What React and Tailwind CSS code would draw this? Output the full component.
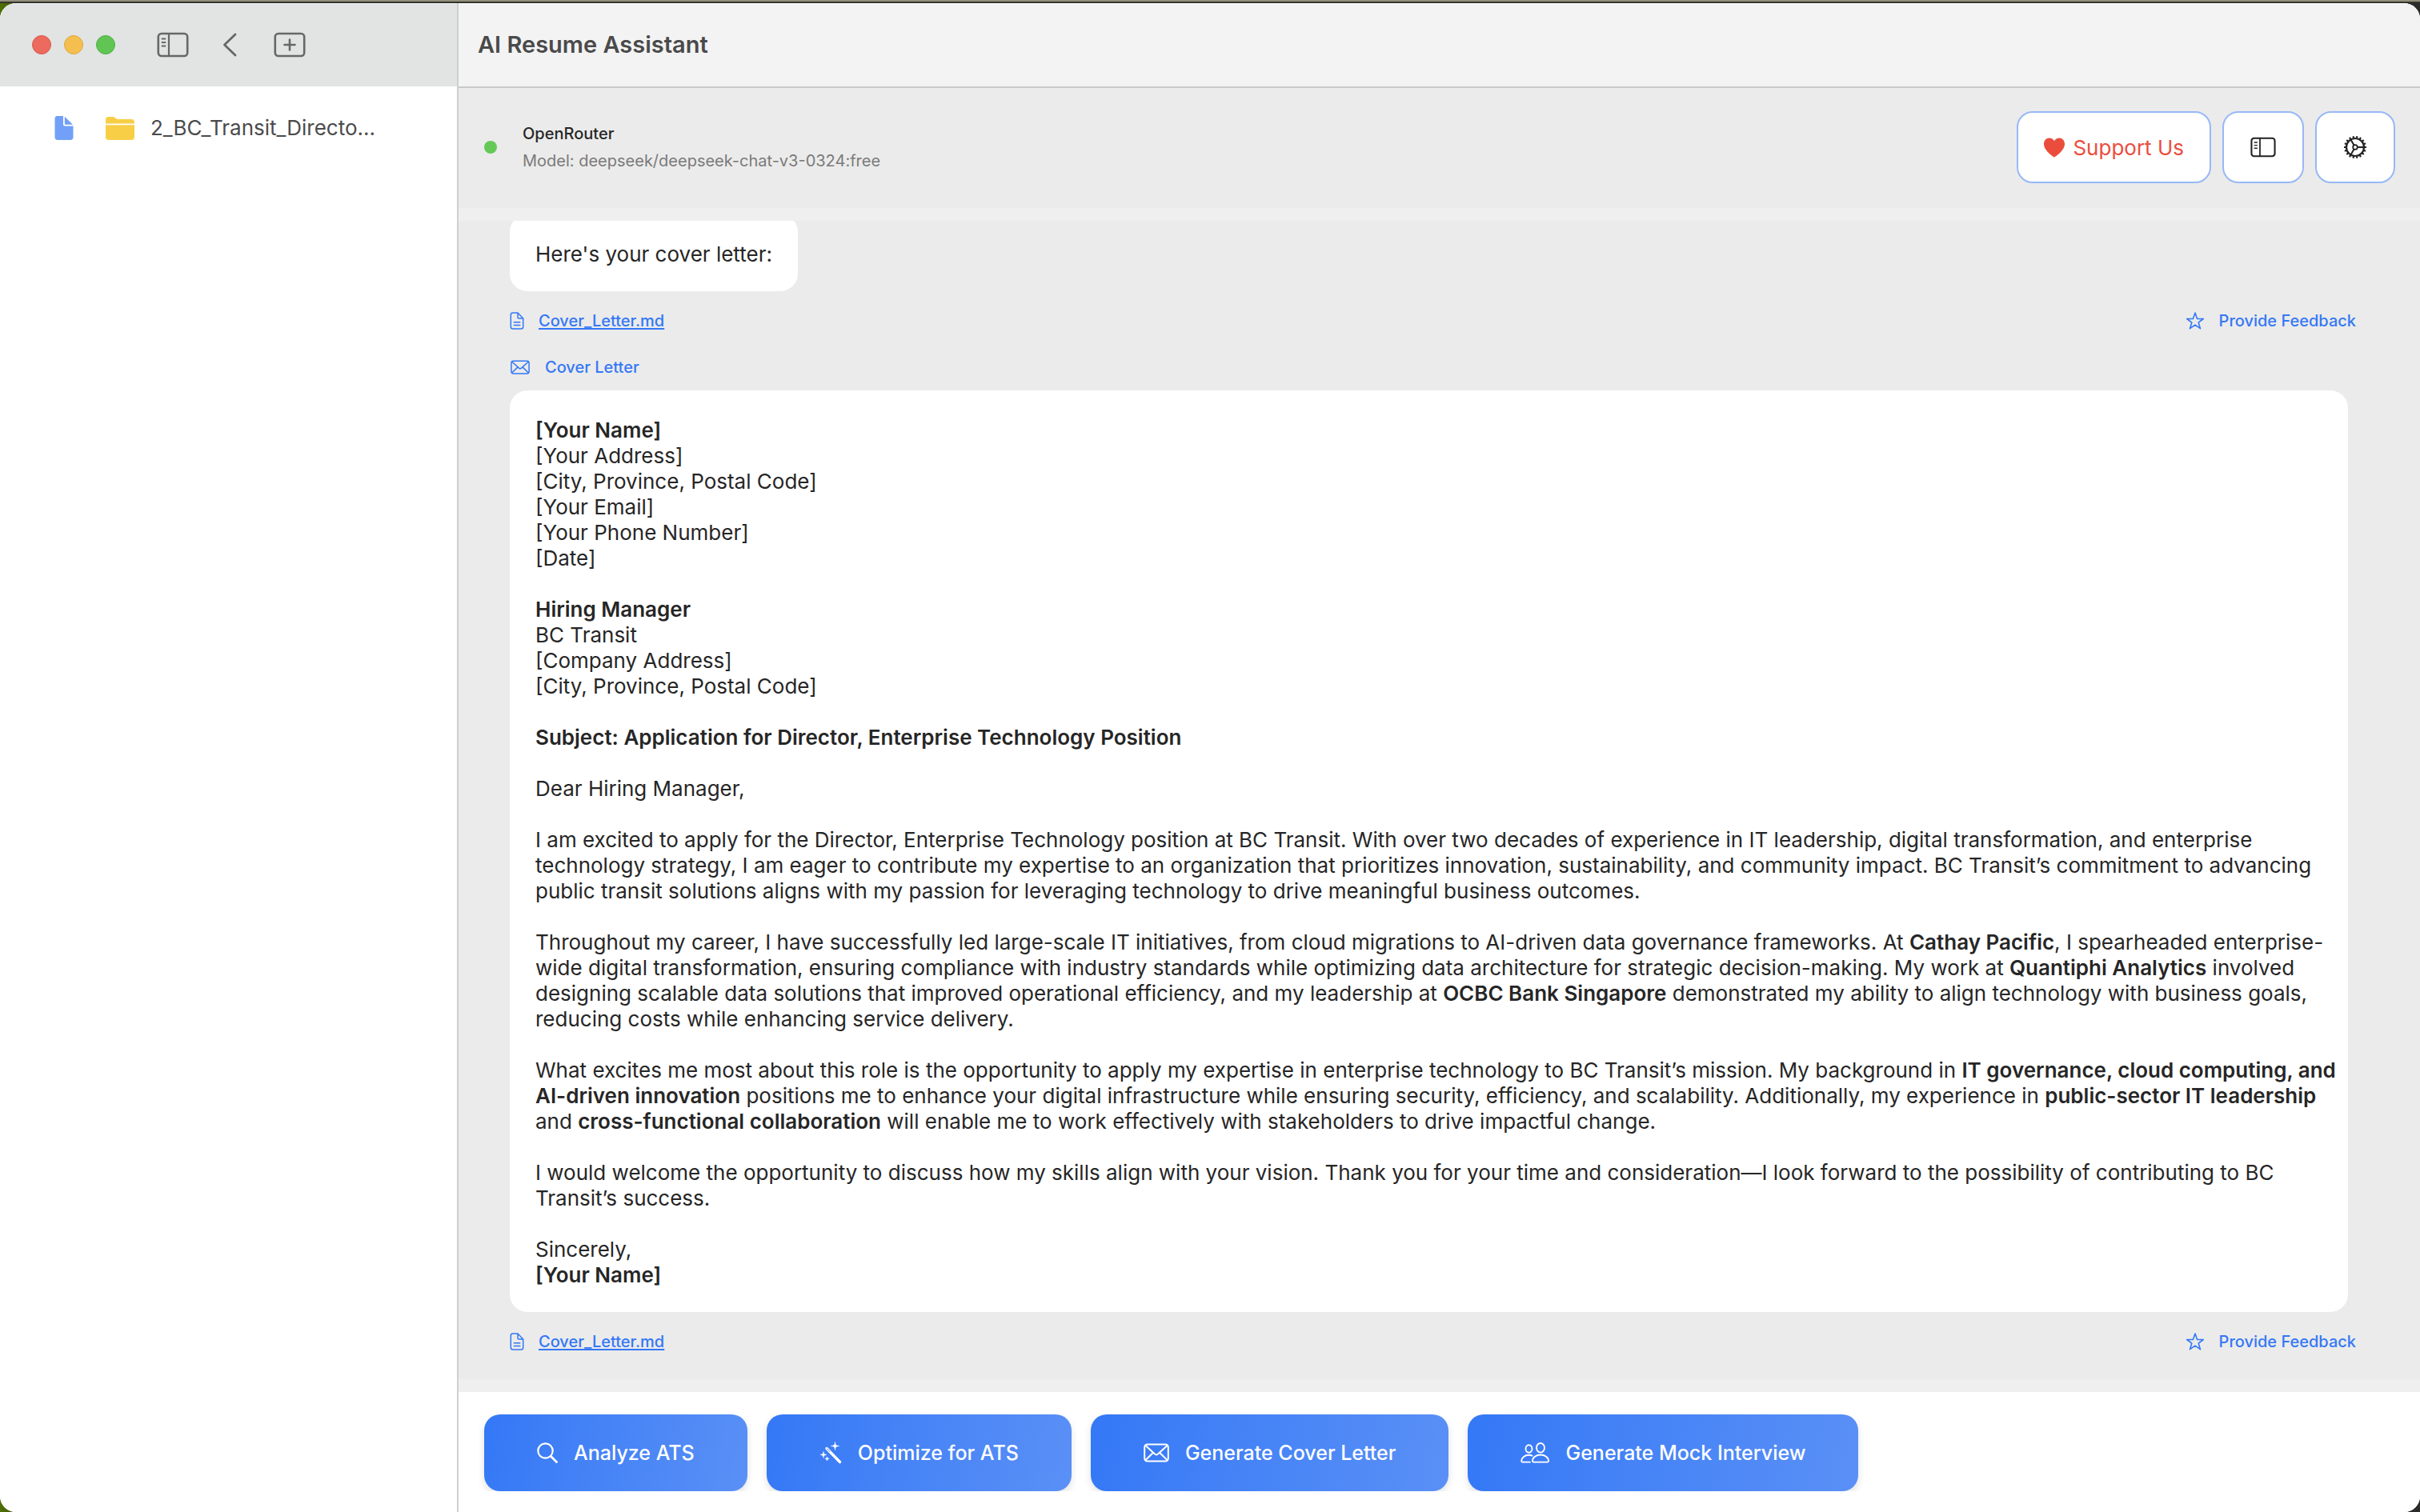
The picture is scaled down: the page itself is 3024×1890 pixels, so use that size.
const stroke = {
  fill: "none",
  stroke: "currentColor",
  strokeLinecap: "round",
  strokeLinejoin: "round",
};

function SidebarIcon({ className }) {
  return (
    <svg viewBox="0 0 40 32" className={className} aria-hidden="true" {...stroke} strokeWidth="2.6">
      <rect x="1.8" y="2" width="36.4" height="28" rx="4" />
      <path d="M15 2v28" strokeWidth="2.2" />
      <path d="M6.5 8.5h4M6.5 13h4M6.5 17.5h4" strokeWidth="1.8" />
    </svg>
  );
}

function ChevronIcon() {
  return (
    <svg viewBox="0 0 18 30" className="h-[30px] w-[18px]" aria-hidden="true" {...stroke} strokeWidth="2.8">
      <path d="M16 2 2.5 15 16 28" />
    </svg>
  );
}

function PlusBoxIcon() {
  return (
    <svg viewBox="0 0 40 32" className="h-8 w-10" aria-hidden="true" {...stroke} strokeWidth="2.6">
      <rect x="1.8" y="2" width="36.4" height="28" rx="4" />
      <path d="M20 9.5v13M13.5 16h13" />
    </svg>
  );
}

function FileSolidIcon() {
  return (
    <svg viewBox="0 0 24 30" className="h-[30px] w-6" fill="#72a0f8" aria-hidden="true">
      <path d="M3.5 0H11v10.5c0 1.200.8 2 2 2H23.500V26.500c0 2-1.500 3.500-3.500 3.500H4C2 30 .5 28.500.5 26.500V3.500C.5 1.500 1.500 0 3.500 0Z" />
      <path d="M12.800.8V9.500c0 .8.500 1.300 1.200 1.300h9Z" />
    </svg>
  );
}

function FolderIcon() {
  return (
    <svg viewBox="0 0 36 30" className="h-[30px] w-9" fill="#f8ce46" aria-hidden="true">
      <path d="M0 9.500V4.500C0 2 1.500 1 3.500 1H9c3 0 3.500 3 6.500 3H32c2.500 0 4 1.500 4 4v1.500Z" />
      <path d="M0 11.300h36V26c0 2.500-1.500 4-4 4H4c-2.500 0-4-1.500-4-4Z" />
    </svg>
  );
}

function HeartIcon() {
  return (
    <svg viewBox="0 0 26 25" className="h-[25px] w-[26px]" fill="currentColor" aria-hidden="true">
      <path d="M13 24.500C12.500 24.500 0 16.500 0 8 0 3.500 3 .5 6.800.5 9.500.5 11.800 2 13 4.300 14.200 2 16.500.5 19.200.5 23 .5 26 3.500 26 8 26 16.500 13.500 24.500 13 24.500Z" />
    </svg>
  );
}

const teeth = Array.from({ length: 18 }, (_, i) => i * 20);

function GearIcon() {
  return (
    <svg viewBox="0 0 30 30" className="h-[30px] w-[30px]" aria-hidden="true" fill="none" stroke="currentColor">
      <circle cx="15" cy="15" r="11" strokeWidth="2.2" />
      <circle cx="15" cy="15" r="2.800" strokeWidth="1.800" />
      {teeth.map((a) => (
        <path key={a} d="M15 3.500V1" strokeWidth="2.200" transform={`rotate(${a + 10} 15 15)`} />
      ))}
      <path d="M18 15H26M13.500 12.400 9.500 5.500M13.500 17.600 9.500 24.500" strokeWidth="2" />
    </svg>
  );
}

function DocIcon() {
  return (
    <svg viewBox="0 0 18 22" className="h-[22px] w-[18px]" aria-hidden="true" {...stroke} strokeWidth="1.5">
      <path d="M10 1H4C2 1 1.300 1.800 1.300 3.500v15C1.300 20.300 2 21 4 21H14.200c1.800 0 2.500-.8 2.500-2.500V8ZM10 1V6.500C10 7.500 10.500 8 11.500 8H16.700" />
      <path d="M5.300 12.800h7.500M5.300 16.500h7.500" />
    </svg>
  );
}

function MailIcon({ className }) {
  return (
    <svg viewBox="0 0 32 24" className={className} aria-hidden="true" {...stroke} strokeWidth="2">
      <rect x="1.200" y="1.500" width="29.600" height="21" rx="3.500" />
      <path d="M2.500 3 14 13.500c1.300 1.100 2.700 1.100 4 0L29.500 3M2.500 21 12 11.800M29.500 21 20 11.800" />
    </svg>
  );
}

function StarIcon() {
  return (
    <svg viewBox="0 0 24 24" className="h-6 w-6" aria-hidden="true" {...stroke} strokeWidth="1.6">
      <path d="M12 2 14.600 9.400 22.300 9.500 16.200 14.200 18.500 21.700 12 17.200 5.500 21.700 7.800 14.200 1.700 9.500 9.400 9.400Z" />
    </svg>
  );
}

function SearchIcon() {
  return (
    <svg viewBox="1 1 26 26" className="h-[26px] w-[26px]" aria-hidden="true" {...stroke} strokeWidth="2.2">
      <circle cx="11.500" cy="11.500" r="9.200" />
      <path d="M18.500 18.500 25.500 25.500" strokeWidth="2.800" />
    </svg>
  );
}

function WandIcon() {
  return (
    <svg viewBox="0 0 28 28" className="h-7 w-7" aria-hidden="true" fill="currentColor">
      <path d="M9 8.500 25.500 25.500" fill="none" stroke="currentColor" strokeWidth="3.400" strokeLinecap="round" />
      <path d="M9.300 8.800 12.800 12.400" fill="none" stroke="#3f7ff7" strokeWidth="1" strokeLinecap="round" />
      <path d="M19.500 .5C20 4.500 20.500 5 24.500 5.500 20.500 6 20 6.500 19.500 10.500 19 6.500 18.500 6 14.500 5.500 18.500 5 19 4.500 19.500 .5Z" stroke="currentColor" strokeWidth="0.6" />
      <path d="M5 12.500c.4 3 .9 3.500 3.900 3.900-3 .4-3.500.9-3.900 3.900-.4-3-.9-3.500-3.900-3.900 3-.4 3.500-.9 3.900-3.900Z" stroke="currentColor" strokeWidth="0.6" />
      <path d="M9.500 18.800c.3 2 .6 2.300 2.600 2.600-2 .3-2.300.6-2.600 2.600-.3-2-.6-2.300-2.600-2.600 2-.3 2.300-.6 2.600-2.600Z" stroke="currentColor" strokeWidth="0.6" />
    </svg>
  );
}

function PeopleIcon() {
  return (
    <svg viewBox="0 0 36 28" className="h-7 w-9" aria-hidden="true" {...stroke} strokeWidth="1.900">
      <ellipse cx="10.500" cy="9" rx="4" ry="4.700" />
      <ellipse cx="25" cy="7.800" rx="5" ry="5.800" />
      <path d="M25 16.500c5.500 0 10 3.500 10 7.700 0 1-.6 1.400-1.500 1.400H16.500c-.9 0-1.500-.4-1.500-1.400 0-4.200 4.500-7.700 10-7.700Z" />
      <path d="M14.500 17.600C13.300 17 12 16.800 10.500 16.800 5.500 16.800 1.200 20.200 1.200 24.300c0 .9.500 1.300 1.300 1.300H12" />
    </svg>
  );
}

function FileRow() {
  return (
    <div className="flex h-8 items-center justify-between text-[20px] leading-8 font-medium text-[#3478f6]">
      <a href="#cover-letter" className="flex items-center gap-[18px]">
        <DocIcon />
        <span className="underline decoration-2 underline-offset-2">Cover_Letter.md</span>
      </a>
      <button type="button" className="flex items-center gap-[18px]">
        <StarIcon />
        Provide Feedback
      </button>
    </div>
  );
}

const actions = [
  { label: "Analyze ATS", icon: <SearchIcon /> },
  { label: "Optimize for ATS", icon: <WandIcon /> },
  { label: "Generate Cover Letter", icon: <MailIcon className="h-6 w-8" /> },
  { label: "Generate Mock Interview", icon: <PeopleIcon /> },
];

function Sidebar() {
  return (
    <aside className="flex w-[573px] shrink-0 flex-col border-r-2 border-[#cfcfcf] bg-white">
      <div className="flex h-[104px] items-center border-t border-[#f4f5f5] bg-[#e1e4e3] pb-0.5 pl-10 text-[#666867]">
        <div className="flex gap-4">
          <button type="button" aria-label="Close" className="h-6 w-6 rounded-full border border-[#d9574c] bg-[#ed6a5e]" />
          <button type="button" aria-label="Minimize" className="h-6 w-6 rounded-full border border-[#dda73f] bg-[#f5bf4f]" />
          <button type="button" aria-label="Zoom" className="h-6 w-6 rounded-full border border-[#50ae43] bg-[#61c554]" />
        </div>
        <button type="button" aria-label="Toggle sidebar" className="ml-[52px]">
          <SidebarIcon className="h-8 w-10" />
        </button>
        <button type="button" aria-label="Back" className="ml-[42px]">
          <ChevronIcon />
        </button>
        <button type="button" aria-label="New" className="ml-[46px]">
          <PlusBoxIcon />
        </button>
      </div>
      <nav className="px-[68px] pt-9">
        <a href="#folder" className="flex items-center whitespace-nowrap text-[26px] leading-[32px] text-[#4b4b4b]">
          <FileSolidIcon />
          <span className="ml-10">
            <FolderIcon />
          </span>
          <span className="ml-5">2_BC_Transit_Directo...</span>
        </a>
      </nav>
    </aside>
  );
}

function Letter() {
  return (
    <article
      id="cover-letter"
      className="mt-[13px] mr-[10px] space-y-8 rounded-[22px] bg-white pt-[34px] pr-2 pb-[30px] pl-8 text-[26px] leading-8 text-[#262626] [&_strong]:font-semibold"
    >
      <p>
        <strong>[Your Name]</strong>
        <br />
        [Your Address]
        <br />
        [City, Province, Postal Code]
        <br />
        [Your Email]
        <br />
        [Your Phone Number]
        <br />
        [Date]
      </p>
      <p>
        <strong>Hiring Manager</strong>
        <br />
        BC Transit
        <br />
        [Company Address]
        <br />
        [City, Province, Postal Code]
      </p>
      <p>
        <strong>Subject: Application for Director, Enterprise Technology Position</strong>
      </p>
      <p>Dear Hiring Manager,</p>
      <p>
        I am excited to apply for the Director, Enterprise Technology position at BC Transit. With over two decades of
        experience in IT leadership, digital transformation, and enterprise technology strategy, I am eager to
        contribute my expertise to an organization that prioritizes innovation, sustainability, and community impact.
        BC Transit’s commitment to advancing public transit solutions aligns with my passion for leveraging technology
        to drive meaningful business outcomes.
      </p>
      <p>
        Throughout my career, I have successfully led large-scale IT initiatives, from cloud migrations to AI-driven
        data governance frameworks. At <strong>Cathay Pacific</strong>, I spearheaded enterprise-wide digital
        transformation, ensuring compliance with industry standards while optimizing data architecture for strategic
        decision-making. My work at <strong>Quantiphi Analytics</strong> involved designing scalable data solutions
        that improved operational efficiency, and my leadership at <strong>OCBC Bank Singapore</strong> demonstrated my
        ability to align technology with business goals, reducing costs while enhancing service delivery.
      </p>
      <p>
        What excites me most about this role is the opportunity to apply my expertise in enterprise technology to BC
        Transit’s mission. My background in <strong>IT governance, cloud computing, and AI-driven innovation</strong>{" "}
        positions me to enhance your digital infrastructure while ensuring security, efficiency, and scalability.
        Additionally, my experience in <strong>public-sector IT leadership</strong> and{" "}
        <strong>cross-functional collaboration</strong> will enable me to work effectively with stakeholders to drive
        impactful change.
      </p>
      <p>
        I would welcome the opportunity to discuss how my skills align with your vision. Thank you for your time and
        consideration—I look forward to the possibility of contributing to BC Transit’s success.
      </p>
      <p>
        Sincerely,
        <br />
        <strong>[Your Name]</strong>
      </p>
    </article>
  );
}

const outlined = "flex h-[90px] items-center justify-center rounded-[20px] border-2 border-[#97b8f6] bg-white";

export default function App() {
  return (
    <div className="flex h-screen flex-col bg-[linear-gradient(90deg,#4f6f05_0,#26300f_60px,#2b2b29_300px)] font-['Inter',sans-serif]">
      <div className="h-1 shrink-0 border-b-2 border-[#33342e] bg-[#908e79]" />
      <div className="flex min-h-0 flex-1 overflow-hidden rounded-[20px] bg-white">
        <Sidebar />
        <main className="flex min-w-0 flex-1 flex-col bg-[#ebebeb]">
          <header className="flex h-[106px] shrink-0 items-center border-t border-b-2 border-t-white border-b-[#c9c9c9] bg-[#f3f3f3] px-6 pb-0.5">
            <h1 className="text-[29px] leading-9 font-semibold text-[#4a4a4a]">AI Resume Assistant</h1>
          </header>

          <section className="flex h-[150px] shrink-0 items-center pr-[31px] pb-0.5 pl-8">
            <span className="h-4 w-4 rounded-full bg-[#64c957]" />
            <div className="ml-8 text-[20px] leading-[34px]">
              <p className="font-medium text-[#262626]">OpenRouter</p>
              <p className="text-[#7a7a7a]">Model: deepseek/deepseek-chat-v3-0324:free</p>
            </div>
            <div className="ml-auto flex gap-[14px]">
              <button type="button" className={`${outlined} gap-[10px] px-8 text-[26px] text-[#eb4d3d]`}>
                <HeartIcon />
                Support Us
              </button>
              <button type="button" aria-label="Toggle panel" className={`${outlined} w-[102px] text-[#222]`}>
                <SidebarIcon className="h-[26px] w-8" />
              </button>
              <button type="button" aria-label="Settings" className={`${outlined} w-[100px] text-[#222]`}>
                <GearIcon />
              </button>
            </div>
          </section>
          <div className="h-4 shrink-0 bg-[#efefef]" />

          <section className="min-h-0 flex-1 overflow-hidden pr-20 pl-16">
            <div className="-mt-2">
              <p className="mb-[21px] w-fit rounded-[22px] bg-white px-8 pt-[34px] pb-[30px] text-[26px] leading-8 text-[#262626]">
                Here's your cover letter:
              </p>
              <FileRow />
              <div className="mt-[26px] flex h-8 items-center gap-[18px] text-[20px] leading-8 font-medium text-[#3478f6]">
                <MailIcon className="h-[18px] w-[26px]" />
                <h2>Cover Letter</h2>
              </div>
              <Letter />
              <div className="mt-[21px]">
                <FileRow />
              </div>
            </div>
          </section>

          <div className="h-4 shrink-0 bg-[#efefef]" />
          <footer className="flex h-[150px] shrink-0 items-start bg-white pt-7">
            <div className="flex h-24 flex-1 gap-6 overflow-y-clip pl-8">
              {actions.map((a) => (
                <button
                  key={a.label}
                  type="button"
                  className="flex h-24 items-center gap-5 rounded-[20px] bg-linear-100 from-[#3478f6] to-[#5a90f6] px-[66px] text-[25px] leading-8 font-medium text-white shadow-[0_4px_10px_rgba(0,0,0,0.12)]"
                >
                  {a.icon}
                  {a.label}
                </button>
              ))}
            </div>
          </footer>
        </main>
      </div>
    </div>
  );
}
